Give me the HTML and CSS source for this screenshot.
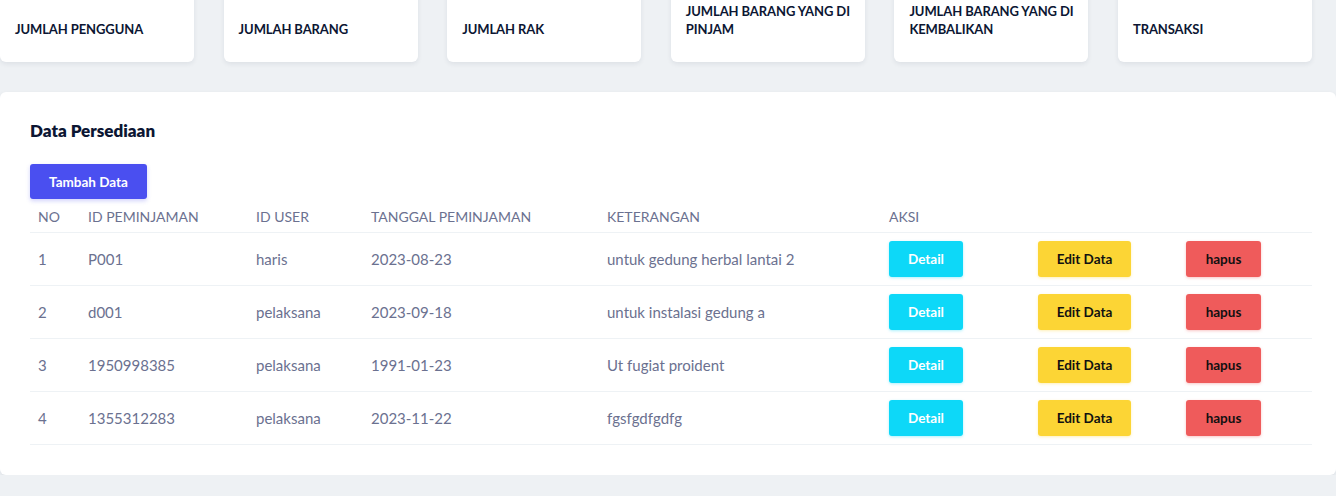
FILE: index.html
```html
<!DOCTYPE html>
<html lang="id">
<head>
<meta charset="utf-8">
<title>Data Persediaan</title>
<link rel="stylesheet" href="styles.css">
</head>
<body>
<div class="page">
  <div class="stats">
    <div class="stat"><span class="stat-title">JUMLAH PENGGUNA</span></div>
    <div class="stat"><span class="stat-title">JUMLAH BARANG</span></div>
    <div class="stat"><span class="stat-title">JUMLAH RAK</span></div>
    <div class="stat"><span class="stat-title">JUMLAH BARANG YANG DI PINJAM</span></div>
    <div class="stat"><span class="stat-title">JUMLAH BARANG YANG DI KEMBALIKAN</span></div>
    <div class="stat"><span class="stat-title">TRANSAKSI</span></div>
  </div>

  <section class="panel">
    <h2 class="panel-title">Data Persediaan</h2>
    <button class="btn btn-primary">Tambah Data</button>
    <table class="data-table">
      <colgroup>
        <col class="c-no"><col class="c-id"><col class="c-user"><col class="c-date"><col class="c-ket"><col class="c-a1"><col class="c-a2"><col class="c-a3">
      </colgroup>
      <thead>
        <tr><th>NO</th><th>ID PEMINJAMAN</th><th>ID USER</th><th>TANGGAL PEMINJAMAN</th><th>KETERANGAN</th><th>AKSI</th><th></th><th></th></tr>
      </thead>
      <tbody>
        <tr><td>1</td><td>P001</td><td>haris</td><td>2023-08-23</td><td>untuk gedung herbal lantai 2</td>
          <td><button class="btn btn-detail">Detail</button></td><td><button class="btn btn-edit">Edit Data</button></td><td><button class="btn btn-delete">hapus</button></td></tr>
        <tr><td>2</td><td>d001</td><td>pelaksana</td><td>2023-09-18</td><td>untuk instalasi gedung a</td>
          <td><button class="btn btn-detail">Detail</button></td><td><button class="btn btn-edit">Edit Data</button></td><td><button class="btn btn-delete">hapus</button></td></tr>
        <tr><td>3</td><td>1950998385</td><td>pelaksana</td><td>1991-01-23</td><td>Ut fugiat proident</td>
          <td><button class="btn btn-detail">Detail</button></td><td><button class="btn btn-edit">Edit Data</button></td><td><button class="btn btn-delete">hapus</button></td></tr>
        <tr><td>4</td><td>1355312283</td><td>pelaksana</td><td>2023-11-22</td><td>fgsfgdfgdfg</td>
          <td><button class="btn btn-detail">Detail</button></td><td><button class="btn btn-edit">Edit Data</button></td><td><button class="btn btn-delete">hapus</button></td></tr>
      </tbody>
    </table>
  </section>
</div>
</body>
</html>
```

FILE: styles.css
```css
html, body {
  margin: 0;
  padding: 0;
  background: #eef1f4;
  overflow: hidden;
}
body {
  font-family: "Lato", "Liberation Sans", sans-serif;
  color: #6b7190;
}
.page {
  margin-top: -40px;
}
.stats {
  display: grid;
  grid-template-columns: repeat(6, 194px);
  column-gap: 29.6px;
}
.stat {
  background: #fff;
  border-radius: 6px;
  height: 102px;
  box-sizing: border-box;
  padding: 0 4px 24px 15px;
  display: flex;
  align-items: flex-end;
  box-shadow: 0 2px 5px rgba(30, 40, 70, 0.08);
}
.stat-title {
  font-size: 13px;
  font-weight: 700;
  line-height: 18px;
  letter-spacing: -0.1px;
  color: #0c1633;
}
.panel {
  margin-top: 30px;
  background: #fff;
  border-radius: 6px;
  box-shadow: 0 2px 5px rgba(30, 40, 70, 0.08);
  padding: 30px 24px 30px 30px;
}
.panel-title {
  margin: 0 0 24px;
  font-size: 17px;
  font-weight: 800;
  line-height: 18px;
  color: #0c1633;
}
.btn {
  font-family: inherit;
  font-size: 13.5px;
  font-weight: 700;
  border: 0;
  border-radius: 3px;
  height: 36px;
  cursor: pointer;
}
.btn-primary {
  background: #4a4ff0;
  color: #fff;
  width: 117px;
  height: 35px;
  box-shadow: 0 2px 4px rgba(74, 79, 240, 0.25);
}
.data-table {
  width: 1282px;
  table-layout: fixed;
  border-collapse: collapse;
  font-size: 15px;
}
.c-no { width: 50px; }
.c-id { width: 168px; }
.c-user { width: 115px; }
.c-date { width: 236px; }
.c-ket { width: 282px; }
.c-a1 { width: 149px; }
.c-a2 { width: 148px; }
.c-a3 { width: 134px; }
.data-table th {
  font-weight: 400;
  text-align: left;
  padding: 2px 8px 0;
  height: 31px;
  font-size: 14px;
  color: #6b7190;
}
.data-table td {
  padding: 0 8px;
  height: 52px;
  border-top: 1px solid #eef2f5;
  color: #6b7190;
}
.data-table tbody tr:last-child td {
  border-bottom: 1px solid #eef2f5;
}
.btn-detail {
  background: #0dd8f8;
  color: #fff;
  width: 74px;
  box-shadow: 0 1px 3px rgba(13, 216, 248, 0.35);
}
.btn-edit {
  background: #fcd535;
  color: #111;
  width: 93px;
  box-shadow: 0 1px 3px rgba(252, 213, 53, 0.35);
}
.btn-delete {
  background: #ef5b5b;
  color: #111;
  width: 75px;
  box-shadow: 0 1px 3px rgba(239, 91, 91, 0.35);
}
```
